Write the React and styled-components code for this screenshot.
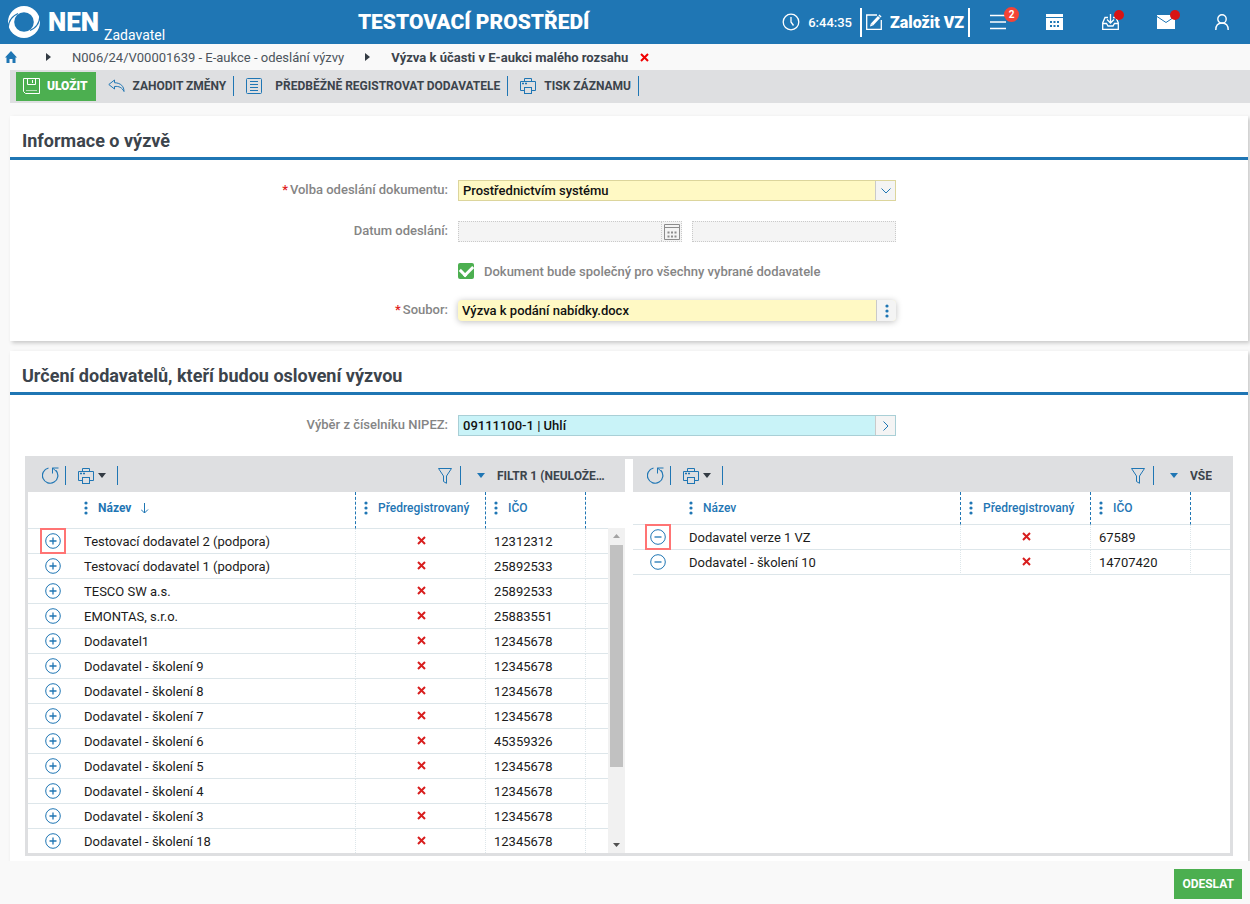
import React from 'react';
import styled, { createGlobalStyle, css } from 'styled-components';

const BLUE = '#1f76b4';

const GlobalStyle = createGlobalStyle`
  * {
    box-sizing: border-box;
  }

  html, body, #root {
    min-height: 100vh;
    margin: 0;
  }

  body {
    background: #f9f9f9;
    color: #3c444c;
    font-family: Roboto, "Liberation Sans", sans-serif;
    font-size: 13px;
  }

  button, input, select {
    font: inherit;
    color: inherit;
  }

  button {
    padding: 0;
    border: 0;
    background: none;
    cursor: pointer;
  }

  svg {
    display: block;
    flex: none;
  }
`;

const available = [
  ['Testovací dodavatel 2 (podpora)', '12312312'],
  ['Testovací dodavatel 1 (podpora)', '25892533'],
  ['TESCO SW a.s.', '25892533'],
  ['EMONTAS, s.r.o.', '25883551'],
  ['Dodavatel1', '12345678'],
  ['Dodavatel - školení 9', '12345678'],
  ['Dodavatel - školení 8', '12345678'],
  ['Dodavatel - školení 7', '12345678'],
  ['Dodavatel - školení 6', '45359326'],
  ['Dodavatel - školení 5', '12345678'],
  ['Dodavatel - školení 4', '12345678'],
  ['Dodavatel - školení 3', '12345678'],
  ['Dodavatel - školení 18', '12345678'],
];

const selected = [
  ['Dodavatel verze 1 VZ', '67589'],
  ['Dodavatel - školení 10', '14707420'],
];

/* ---------- icons ---------- */

const LogoIcon = () => (
  <svg width="32" height="32" viewBox="0 0 32 32" aria-hidden="true">
    <circle cx="16" cy="16" r="16" fill="#fff" />
    <circle cx="16" cy="16" r="9.800" fill={BLUE} />
    <path d="M0 22C.5 15 4 10 10 7.500" fill="none" stroke={BLUE} strokeWidth="1.300" />
    <path d="M32 10C31.500 17 28 22 22 24.500" fill="none" stroke={BLUE} strokeWidth="1.300" />
  </svg>
);

const ClockIcon = () => (
  <svg width="18" height="18" viewBox="0 0 18 18" fill="none" stroke="#fff" strokeWidth="1.300">
    <circle cx="9" cy="9" r="7.800" />
    <path d="M9 4V9L11.500 12.500" />
  </svg>
);

const EditIcon = () => (
  <svg width="16" height="16" viewBox="0 0 16 16" fill="none" stroke="#fff">
    <path d="M11 1H.7V15.300H15.300V6" strokeWidth="1.300" />
    <path d="M6 10.500L13 3" strokeWidth="3" />
    <path d="M13.500 2.500L14.500 1.500" strokeWidth="3" />
    <path d="M4 12.500L4.800 9.500L7 11.600Z" fill="#fff" stroke="none" />
  </svg>
);

const MenuIcon = () => (
  <svg width="16" height="16" viewBox="0 0 16 16" stroke="#fff" strokeWidth="1.500">
    <path d="M0 1.500H16M0 8H16M0 14.500H16" />
  </svg>
);

const CalendarSolidIcon = () => (
  <svg width="17" height="16" viewBox="0 0 17 16">
    <path d="M0 0H17V3H0ZM0 4H17V16H0Z" fill="#fff" />
    <path d="M4 7h2v2H4zM7.500 7h2v2h-2zM11 7h2v2h-2zM4 11h2v2H4zM7.500 11h2v2h-2zM11 11h2v2h-2z" fill={BLUE} />
  </svg>
);

const InboxIcon = () => (
  <svg width="17" height="16" viewBox="0 0 17 16" fill="none" stroke="#fff" strokeWidth="1.300">
    <path d="M8.500 0V8.500M5 5.500L8.500 9L12 5.500" />
    <path d="M6 3.500H3L.7 9V15.300H16.300V9L14 3.500H11" />
    <path d="M.7 9.500H4.500L6 12H11L12.500 9.500H16.300" />
  </svg>
);

const MailIcon = () => (
  <svg width="18" height="14" viewBox="0 0 18 14">
    <path d="M0 0H18V14H0Z" fill="#fff" />
    <path d="M0 1.500L9 7.500L18 1.500" fill="none" stroke={BLUE} />
  </svg>
);

const UserIcon = () => (
  <svg width="14" height="16" viewBox="0 0 14 16" fill="none" stroke="#fff" strokeWidth="1.400">
    <circle cx="7" cy="5" r="4.200" />
    <path d="M.8 16C.8 11.500 3 9 7 9S13.200 11.500 13.200 16" />
  </svg>
);

const HomeIcon = () => (
  <svg width="12" height="12" viewBox="0 0 12 12">
    <path d="M6 0L12 6.500H10.500V12H7.500V8H4.500V12H1.500V6.500H0Z" fill={BLUE} />
  </svg>
);

const SaveIcon = () => (
  <svg width="17" height="16" viewBox="0 0 17 16" fill="none" stroke="#fff">
    <path d="M.5 .5H16.500V15.500H2.500L.5 13.500Z" />
    <path d="M4.500 .5V6.500H12.500V.5M9.500 2V5" />
    <path d="M3 12.500H14" opacity=".6" />
  </svg>
);

const UndoIcon = () => (
  <svg width="17" height="14" viewBox="0 0 17 14" fill="none" stroke={BLUE}>
    <path d="M6.500 1L.8 5.500L6.500 10V7.500C11 7 14 8.500 16 12.500C16 7.500 13 4 6.500 3.700Z" />
  </svg>
);

const ListIcon = () => (
  <svg width="16" height="16" viewBox="0 0 16 16" fill="none" stroke={BLUE}>
    <rect x=".5" y=".5" width="15" height="15" rx="1" />
    <path d="M4 3.500H12M4 6.500H12M4 9.500H12M4 12.500H12" />
  </svg>
);

const PrintIcon = () => (
  <svg width="16" height="16" viewBox="0 0 16 16" fill="none" stroke={BLUE}>
    <path d="M4.500 3V.5H11.500V3" />
    <path d="M4 12.500H.5V3.500H15.500V12.500H12" />
    <rect x="4.500" y="9.500" width="7" height="6" />
    <path d="M2 5.500H4M5 5.500H7" strokeWidth="1.500" />
  </svg>
);

const RefreshIcon = () => (
  <svg width="17" height="17" viewBox="0 0 17 17" fill="none" stroke={BLUE}>
    <path d="M6.500 1A7.700 7.700 0 1 0 14 3.500" strokeWidth="1.200" />
    <path d="M10.500 6.500V1H16.500M10.500 1L14.500 4.500" />
  </svg>
);

const FunnelIcon = () => (
  <svg width="14" height="16" viewBox="0 0 14 16" fill="none" stroke={BLUE}>
    <path d="M.5 .5H13.500L8.500 8V15.300L5.500 13.500V8Z" />
  </svg>
);

const CaretIcon = ({ color = '#333b43' }) => (
  <svg width="8" height="5" viewBox="0 0 8 5">
    <path d="M0 0H8L4 5Z" fill={color} />
  </svg>
);

const CrumbArrow = () => (
  <svg width="5" height="8" viewBox="0 0 5 8">
    <path d="M0 0L5 4L0 8Z" fill="#333b43" />
  </svg>
);

const CrossIcon = ({ color = '#d81e1e' }) => (
  <svg width="9" height="9" viewBox="0 0 9 9">
    <path d="M1 1L8 8M8 1L1 8" stroke={color} strokeWidth="2" />
  </svg>
);

const DotsIcon = () => (
  <svg width="4" height="14" viewBox="0 0 4 14" fill={BLUE}>
    <circle cx="2" cy="2" r="1.600" />
    <circle cx="2" cy="7" r="1.600" />
    <circle cx="2" cy="12" r="1.600" />
  </svg>
);

const SortIcon = () => (
  <svg width="8" height="11" viewBox="0 0 8 11" fill="none" stroke={BLUE}>
    <path d="M3.500 0V10M0 6.500L3.500 10L7 6.500" />
  </svg>
);

const CircleIcon = ({ plus }) => (
  <svg width="16" height="16" viewBox="0 0 16 16" fill="none" stroke={BLUE}>
    <circle cx="8" cy="8" r="7.300" />
    <path d={plus ? 'M4.500 8H11.500M8 4.500V11.500' : 'M4.500 8H11.500'} strokeWidth="1.300" />
  </svg>
);

const CalendarIcon = () => (
  <svg width="16" height="16" viewBox="0 0 16 16" fill="none" stroke="#8c8c8c">
    <path d="M.5 .5H15.500V15.500H.5ZM.5 3.500H15.500" />
    <path d="M3.500 8.500H13M3.500 12.500H13" strokeWidth="2" strokeDasharray="2 1.500" />
  </svg>
);

/* ---------- header ---------- */

const StyledHeader = styled.header`
  display: flex;
  align-items: center;
  height: 44px;
  padding-left: 8px;
  background: ${BLUE};
  color: #fff;
`;

const StyledBrand = styled.a`
  display: flex;
  align-items: center;
  align-self: stretch;
  color: #fff;
  text-decoration: none;
`;

const StyledBrandName = styled.span`
  margin-left: 8px;
  font-size: 26px;
  font-weight: 900;
`;

const StyledBrandRole = styled.span`
  align-self: flex-end;
  margin-left: 5px;
  font-size: 14px;
  line-height: 18px;
`;

const StyledHeaderTitle = styled.h1`
  flex: 1;
  margin: 0;
  font-size: 21px;
  font-weight: 900;
  text-align: center;
`;

const StyledClock = styled.div`
  display: flex;
  align-items: center;
  gap: 8px;
  margin-right: 8px;
  font-size: 13px;
  font-weight: 500;
`;

const StyledCreateButton = styled.button`
  display: flex;
  align-items: center;
  gap: 8px;
  height: 29px;
  padding: 0 4px;
  border: solid #fff;
  border-width: 0 2px;
  font-size: 16px;
  font-weight: 900;
`;

const StyledHeaderButton = styled.button`
  position: relative;
  display: flex;
  align-items: center;
  justify-content: center;
  width: 56px;
  height: 44px;
`;

const StyledBadge = styled.span`
  position: absolute;
  top: 7px;
  right: 7px;
  width: 15px;
  border-radius: 8px;
  background: #f44336;
  font-size: 10px;
  font-weight: 700;
  line-height: 15px;
`;

const StyledDot = styled.span`
  position: absolute;
  top: 10px;
  right: 14px;
  width: 10px;
  height: 10px;
  border-radius: 50%;
  background: #d81414;
`;

/* ---------- breadcrumb and record toolbar ---------- */

const StyledBreadcrumb = styled.nav`
  display: flex;
  align-items: center;
  gap: 21px;
  height: 26px;
  padding-left: 5px;
  font-size: 13px;

  a {
    color: #4c545c;
    text-decoration: none;
  }

  a:first-child {
    margin-right: 8px;
  }
`;

const StyledCurrentCrumb = styled.span`
  display: flex;
  align-items: center;
  gap: 12px;
  color: #3c444c;
  font-weight: 700;
`;

const StyledToolbar = styled.div`
  display: flex;
  align-items: center;
  height: 33px;
  margin-left: 10px;
  padding: 0 6px 1px;
  background: #dedfe1;
`;

const StyledToolButton = styled.button`
  display: flex;
  align-items: center;
  gap: ${props => (props.$wide ? 13 : 8)}px;
  height: 20px;
  padding: 0 7px 0 12px;
  border-right: 1px solid ${props => (props.$divided ? BLUE : 'transparent')};
  font-size: 12px;
  font-weight: 700;
  white-space: nowrap;

  ${props => props.$primary && css`
    gap: 7px;
    height: 29px;
    padding: 0 8px 0 7px;
    border: 0;
    background: #4caf50;
    color: #fff;
    font-weight: 900;
  `}
`;

/* ---------- cards and form ---------- */

const StyledCard = styled.section`
  margin: ${props => (props.$first ? 13 : 10)}px 2px 0 10px;
  background: #fff;
  box-shadow: 2px 2px 4px rgba(0, 0, 0, 0.2);
`;

const StyledCardTitle = styled.h2`
  height: 44px;
  margin: 0;
  padding: 12px 12px 0;
  border-bottom: 3px solid ${BLUE};
  font-size: 18px;
  font-weight: 700;
  line-height: 26px;
`;

const StyledForm = styled.div`
  display: grid;
  gap: 20px;
  padding: 20px 0;
`;

const StyledRow = styled.div`
  display: grid;
  grid-template-columns: 438fr 438fr 342fr;
  column-gap: 10px;
  align-items: start;
`;

const StyledLabel = styled.label`
  color: #858585;
  font-weight: 500;
  line-height: 19px;
  text-align: right;

  ${props => props.$required && css`
    &::before {
      content: '*';
      margin-right: 2px;
      color: #e02020;
    }
  `}
`;

const tones = {
  yellow: css`
    border-color: #dcd59c;
    background: #fff9c4;
  `,
  cyan: css`
    border-color: #a9cfd6;
    background: #c9f3f8;
  `,
  disabled: css`
    border: 1px dotted #cacaca;
    background: #f4f4f4;
  `,
  file: css`
    border: 0;
    border-radius: 4px;
    background: #fff9c4;
    box-shadow: 0 1px 6px rgba(0, 0, 0, 0.25);
    overflow: hidden;
  `,
};

const StyledField = styled.div`
  display: flex;
  height: 21px;
  border: 1px solid;
  ${props => tones[props.$tone]}
`;

const inputStyle = css`
  flex: 1;
  min-width: 0;
  padding: 0 4px;
  border: 0;
  outline: 0;
  background: transparent;
  color: #111;
  font-size: 13px;
  font-weight: 500;
`;

const StyledInput = styled.input`
  ${inputStyle}
`;

const StyledSelect = styled.select`
  ${inputStyle}
  appearance: none;
`;

const StyledFieldButton = styled.button`
  display: flex;
  align-items: center;
  justify-content: center;
  width: 20px;
  border-left: 1px ${props => (props.$dotted ? 'dotted' : 'solid')} #cacaca;
  background: #f4f4f4;
`;

const StyledDateFields = styled.div`
  display: grid;
  grid-template-columns: 11fr 10fr;
  gap: 10px;
`;

const StyledCheckLabel = styled.label`
  display: flex;
  grid-column: 2;
  align-items: center;
  gap: 10px;
  height: 18px;
  color: #858585;
  font-weight: 500;
  white-space: nowrap;
`;

const StyledCheckbox = styled.input`
  display: grid;
  width: 16px;
  height: 16px;
  margin: 0;
  place-content: center;
  border-radius: 2px;
  background: #4caf50;
  appearance: none;

  &:checked::after {
    content: '';
    width: 10px;
    height: 6px;
    margin-bottom: 3px;
    border: solid #fff;
    border-width: 0 0 3px 3px;
    transform: rotate(-45deg);
  }
`;

/* ---------- supplier grids ---------- */

const StyledSplit = styled.div`
  display: grid;
  grid-template-columns: minmax(0, 1fr) minmax(0, 1fr);
  column-gap: 8px;
  margin: 0 15px;
  border: 3px solid #dedfe1;
`;

const StyledCardBody = styled.div`
  padding-bottom: 5px;
`;

const StyledGridToolbar = styled.div`
  display: flex;
  align-items: center;
  height: 33px;
  padding: 0 ${props => (props.$scroll ? 16 : 14)}px 0 14px;
  background: #dedfe1;
`;

const StyledGridTool = styled.button`
  display: flex;
  align-items: center;
  gap: 4px;
  height: 19px;
  padding-right: ${props => props.$end}px;
  border-right: 1px solid ${BLUE};

  & + & {
    margin-left: 12px;
  }
`;

const StyledFilterGroup = styled.div`
  display: flex;
  align-items: center;
  margin-left: auto;
`;

const StyledFilterLabel = styled.label`
  display: flex;
  align-items: center;
  gap: 12px;
  margin-left: 16px;
`;

const StyledFilterSelect = styled.select`
  border: 0;
  padding: 0 4px 0 0;
  background: transparent;
  font-size: 12px;
  font-weight: 700;
  appearance: none;
`;

const StyledGridBody = styled.div`
  display: flex;
  align-items: flex-start;
`;

const StyledTable = styled.table`
  flex: 1;
  min-width: 0;
  table-layout: fixed;
  border-collapse: separate;
  border-spacing: 0;
  color: #1b1b1b;

  th {
    height: ${props => (props.$scroll ? 37 : 33)}px;
    padding: 0 0 0 8px;
    border-bottom: 1px solid #dde6ea;
    border-right: 1px dashed ${BLUE};
    color: ${BLUE};
    font-weight: 500;
    text-align: left;
    vertical-align: top;
  }

  td {
    height: 25px;
    padding: 0 0 0 8px;
    border-bottom: 1px solid #dde6ea;
    border-right: 1px dotted #dde6ea;
    white-space: nowrap;
  }

  td:first-child {
    padding: 0 0 0 17px;
  }

  th:first-child, td:first-child,
  th:last-child, td:last-child {
    border-right: 0;
  }

  ${props => props.$scroll && css`
    tbody tr:last-child td {
      height: 24px;
      border-bottom: 0;
    }
  `}
`;

const StyledHeadCell = styled.div`
  display: flex;
  align-items: center;
  gap: 10px;
  padding-top: 8px;
  font-weight: ${props => (props.$sorted ? 700 : 500)};
  font-size: 12px;
  line-height: 16px;
`;

const StyledRowAction = styled.button`
  position: relative;
  display: block;

  ${props => props.$marked && css`
    &::after {
      content: '';
      position: absolute;
      inset: -5px;
      border: 2px solid #ff7474;
    }
  `}
`;

const StyledMark = styled.span`
  display: flex;
  justify-content: center;
  padding: 0 6px 2px 0;
`;

const StyledScrollbar = styled.div`
  display: flex;
  flex-direction: column;
  align-self: stretch;
  align-items: center;
  justify-content: space-between;
  width: 17px;
  margin-top: 36px;
  padding: 6px 0;
  background: #f1f1f1;
`;

const StyledScrollTrack = styled.div`
  flex: 1;
  width: 13px;
  margin: 7px 0 6px;
`;

const StyledScrollThumb = styled.div`
  height: 76%;
  background: #c1c1c1;
`;

const StyledFooter = styled.footer`
  position: relative;
  display: flex;
  justify-content: flex-end;
  padding: 8px 8px 5px;
  background: #f9f9f9;
`;

const StyledSubmit = styled.button`
  height: 30px;
  padding: 0 8px;
  background: #4caf50;
  color: #fff;
  font-size: 12px;
  font-weight: 700;
`;

const SupplierGrid = ({ rows, filter, plus, sorted, scroll }) => (
  <div>
    <StyledGridToolbar $scroll={scroll}>
      <StyledGridTool type="button" $end={6} aria-label="Obnovit"><RefreshIcon /></StyledGridTool>
      <StyledGridTool type="button" $end={11} aria-label="Tisk"><PrintIcon /><CaretIcon /></StyledGridTool>
      <StyledFilterGroup>
        <StyledGridTool type="button" $end={8} aria-label="Filtr"><FunnelIcon /></StyledGridTool>
        <StyledFilterLabel>
          <CaretIcon color={BLUE} />
          <StyledFilterSelect aria-label="Uložený filtr">
            <option>{filter}</option>
          </StyledFilterSelect>
        </StyledFilterLabel>
      </StyledFilterGroup>
    </StyledGridToolbar>
    <StyledGridBody>
      <StyledTable $scroll={scroll}>
        <colgroup>
          <col style={{ width: 48 }} />
          <col />
          <col style={{ width: 130 }} />
          <col style={{ width: 100 }} />
          <col style={{ width: scroll ? 22 : 39 }} />
        </colgroup>
        <thead>
          <tr>
            <th />
            <th><StyledHeadCell $sorted={sorted}><DotsIcon />Název{sorted && <SortIcon />}</StyledHeadCell></th>
            <th><StyledHeadCell><DotsIcon />Předregistrovaný</StyledHeadCell></th>
            <th><StyledHeadCell><DotsIcon />IČO</StyledHeadCell></th>
            <th />
          </tr>
        </thead>
        <tbody>
          {rows.map(([name, ico], index) => (
            <tr key={name}>
              <td>
                <StyledRowAction type="button" $marked={index === 0} aria-label={plus ? 'Přidat' : 'Odebrat'}>
                  <CircleIcon plus={plus} />
                </StyledRowAction>
              </td>
              <td>{name}</td>
              <td><StyledMark><CrossIcon /></StyledMark></td>
              <td>{ico}</td>
              <td />
            </tr>
          ))}
        </tbody>
      </StyledTable>
      {scroll && (
        <StyledScrollbar>
          <svg width="7" height="4" viewBox="0 0 7 4"><path d="M0 4H7L3.500 0Z" fill="#a3a3a3" /></svg>
          <StyledScrollTrack><StyledScrollThumb /></StyledScrollTrack>
          <svg width="7" height="4" viewBox="0 0 7 4"><path d="M0 0H7L3.500 4Z" fill="#505050" /></svg>
        </StyledScrollbar>
      )}
    </StyledGridBody>
  </div>
);

const App = () => {
  return (
    <>
      <GlobalStyle />
      <StyledHeader>
        <StyledBrand href="#">
          <LogoIcon />
          <StyledBrandName>NEN</StyledBrandName>
          <StyledBrandRole>Zadavatel</StyledBrandRole>
        </StyledBrand>
        <StyledHeaderTitle>TESTOVACÍ PROSTŘEDÍ</StyledHeaderTitle>
        <StyledClock><ClockIcon />6:44:35</StyledClock>
        <StyledCreateButton type="button"><EditIcon />Založit VZ</StyledCreateButton>
        <StyledHeaderButton type="button" aria-label="Menu"><MenuIcon /><StyledBadge>2</StyledBadge></StyledHeaderButton>
        <StyledHeaderButton type="button" aria-label="Kalendář"><CalendarSolidIcon /></StyledHeaderButton>
        <StyledHeaderButton type="button" aria-label="Doručené"><InboxIcon /><StyledDot /></StyledHeaderButton>
        <StyledHeaderButton type="button" aria-label="Zprávy"><MailIcon /><StyledDot /></StyledHeaderButton>
        <StyledHeaderButton type="button" aria-label="Uživatel"><UserIcon /></StyledHeaderButton>
      </StyledHeader>

      <StyledBreadcrumb>
        <a href="#" aria-label="Domů"><HomeIcon /></a>
        <CrumbArrow />
        <a href="#">N006/24/V00001639 - E-aukce - odeslání výzvy</a>
        <CrumbArrow />
        <StyledCurrentCrumb>
          Výzva k účasti v E-aukci malého rozsahu
          <button type="button" aria-label="Zavřít"><CrossIcon color="#f00000" /></button>
        </StyledCurrentCrumb>
      </StyledBreadcrumb>

      <StyledToolbar>
        <StyledToolButton type="button" $primary><SaveIcon />ULOŽIT</StyledToolButton>
        <StyledToolButton type="button" $divided><UndoIcon />ZAHODIT ZMĚNY</StyledToolButton>
        <StyledToolButton type="button" $divided $wide><ListIcon />PŘEDBĚŽNĚ REGISTROVAT DODAVATELE</StyledToolButton>
        <StyledToolButton type="button" $divided><PrintIcon />TISK ZÁZNAMU</StyledToolButton>
      </StyledToolbar>

      <main>
        <StyledCard $first>
          <StyledCardTitle>Informace o výzvě</StyledCardTitle>
          <StyledForm>
            <StyledRow>
              <StyledLabel htmlFor="volba" $required>Volba odeslání dokumentu:</StyledLabel>
              <StyledField $tone="yellow">
                <StyledSelect id="volba">
                  <option>Prostřednictvím systému</option>
                </StyledSelect>
                <StyledFieldButton type="button" aria-label="Rozbalit">
                  <svg width="10" height="6" viewBox="0 0 10 6" fill="none" stroke={BLUE}><path d="M.5 .5L5 5L9.500 .5" /></svg>
                </StyledFieldButton>
              </StyledField>
            </StyledRow>
            <StyledRow>
              <StyledLabel htmlFor="datum">Datum odeslání:</StyledLabel>
              <StyledDateFields>
                <StyledField $tone="disabled">
                  <StyledInput id="datum" disabled />
                  <StyledFieldButton type="button" $dotted disabled aria-label="Vybrat datum"><CalendarIcon /></StyledFieldButton>
                </StyledField>
                <StyledField $tone="disabled">
                  <StyledInput aria-label="Čas odeslání" disabled />
                </StyledField>
              </StyledDateFields>
            </StyledRow>
            <StyledRow>
              <StyledCheckLabel>
                <StyledCheckbox type="checkbox" defaultChecked />
                Dokument bude společný pro všechny vybrané dodavatele
              </StyledCheckLabel>
            </StyledRow>
            <StyledRow>
              <StyledLabel htmlFor="soubor" $required>Soubor:</StyledLabel>
              <StyledField $tone="file">
                <StyledInput id="soubor" defaultValue="Výzva k podání nabídky.docx" />
                <StyledFieldButton type="button" aria-label="Možnosti"><DotsIcon /></StyledFieldButton>
              </StyledField>
            </StyledRow>
          </StyledForm>
        </StyledCard>

        <StyledCard>
          <StyledCardTitle>Určení dodavatelů, kteří budou oslovení výzvou</StyledCardTitle>
          <StyledForm>
            <StyledRow>
              <StyledLabel htmlFor="nipez">Výběr z číselníku NIPEZ:</StyledLabel>
              <StyledField $tone="cyan">
                <StyledInput id="nipez" defaultValue="09111100-1 | Uhlí" />
                <StyledFieldButton type="button" aria-label="Vybrat">
                  <svg width="6" height="10" viewBox="0 0 6 10" fill="none" stroke={BLUE}><path d="M.5 .5L5 5L.5 9.500" /></svg>
                </StyledFieldButton>
              </StyledField>
            </StyledRow>
          </StyledForm>
          <StyledCardBody>
            <StyledSplit>
              <SupplierGrid rows={available} filter="FILTR 1 (NEULOŽE…" plus sorted scroll />
              <SupplierGrid rows={selected} filter="VŠE" />
            </StyledSplit>
          </StyledCardBody>
        </StyledCard>
      </main>

      <StyledFooter>
        <StyledSubmit type="button">ODESLAT</StyledSubmit>
      </StyledFooter>
    </>
  );
};

export default App;
